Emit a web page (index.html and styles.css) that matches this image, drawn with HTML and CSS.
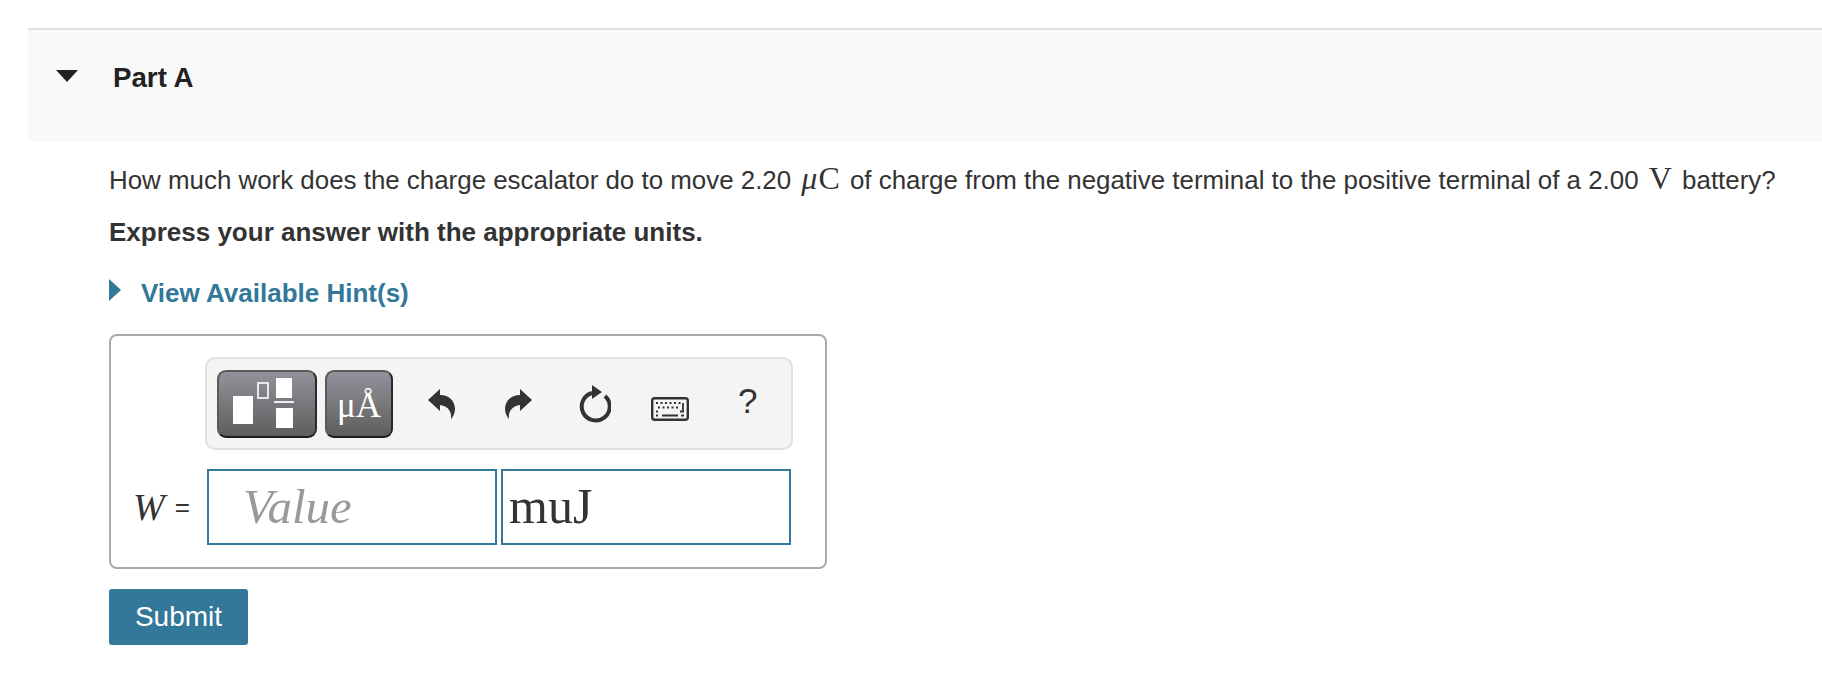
FILE: index.html
```html
<!DOCTYPE html>
<html lang="en">
<head>
    <meta charset="UTF-8">
    <title>Part A</title>
    <link rel="stylesheet" href="styles.css">
</head>
<body>
    <section class="part">
        <header class="part-header">
            <span class="caret-down"></span>
            <h2>Part A</h2>
        </header>

        <div class="part-body">
            <p class="question">How much work does the charge escalator do to move 2.20 <span class="math"><i class="mu">μ</i>C</span> of charge from the negative terminal to the positive terminal of a 2.00 <span class="math">V</span> battery?</p>
            <p class="instruction">Express your answer with the appropriate units.</p>

            <div class="hint">
                <span class="caret-right"></span>
                <a href="#">View Available Hint(s)</a>
            </div>

            <div class="answer-box">
                <div class="toolbar">
                    <button class="tool-btn tool-wide" type="button" aria-label="Templates">
                        <svg width="96" height="64" viewBox="2 2 96 64">
                            <rect x="16" y="26" width="20" height="28" fill="#fff"/>
                            <rect x="41" y="13" width="10" height="15" fill="none" stroke="#e8e8e8" stroke-width="2"/>
                            <rect x="59" y="8" width="16" height="20" fill="#fff"/>
                            <rect x="57" y="31" width="20" height="2" fill="#f0f0f0"/>
                            <rect x="59" y="38" width="17" height="20" fill="#fff"/>
                        </svg>
                    </button>
                    <button class="tool-btn tool-units" type="button">μÅ</button>

                    <svg class="icon icon-undo" width="28" height="32" viewBox="0 0 28 32">
                        <path d="M1 12 13 1v6c9 0 15 6 15 14 0 4-2 8-4 10 1-6-2-13-11-14v6z" fill="#333"/>
                    </svg>
                    <svg class="icon icon-redo" width="28" height="32" viewBox="0 0 28 32">
                        <path d="M27 12 15 1v6C6 7 0 13 0 21c0 4 2 8 4 10-1-6 2-13 11-14v6z" fill="#333"/>
                    </svg>
                    <svg class="icon icon-reset" width="34" height="38" viewBox="0 0 34 38">
                        <path d="M28 11a14 14 0 1 1-13-3" fill="none" stroke="#333" stroke-width="4"/>
                        <path d="M15 0l10 7-10 7z" fill="#333"/>
                    </svg>
                    <svg class="icon icon-keyboard" width="38" height="24" viewBox="0 0 38 24">
                        <rect x="1.2" y="1.2" width="35.6" height="21.6" rx="2.5" fill="none" stroke="#333" stroke-width="2.4"/>
                        <path d="M5 6h2M9.500 6h2M14 6h2M18.500 6h2M23 6h2M27.500 6h2M7 10.500h2M11.500 10.500h2M16 10.500h2M20.500 10.500h2M25 10.500h2M32 6v8.500h-3M5 14.500h2M5 18.500h2M11 18.500h16M30 18.500h3" fill="none" stroke="#333" stroke-width="1.800"/>
                    </svg>
                    <span class="help">?</span>
                </div>

                <div class="answer-row">
                    <label class="answer-label"><i>W</i><span class="equals">=</span></label>
                    <span class="field placeholder">Value</span>
                    <span class="field field-unit">muJ</span>
                </div>
            </div>

            <button class="submit" type="submit">Submit</button>
        </div>
    </section>
</body>
</html>
```

FILE: styles.css
```css
:root {
    --teal: #337899;
    --text: #333333;
    --border: #e0e0e0;
}

* {
    margin: 0;
    padding: 0;
    box-sizing: border-box;
}

body {
    background-color: #ffffff;
    color: var(--text);
    font-family: "Liberation Sans", Arial, sans-serif;
    overflow: hidden;
}

.part {
    padding: 28px 0 0 28px;
}

.part-header {
    display: flex;
    align-items: flex-start;
    height: 114px;
    padding: 32px 0 0 28px;
    background-color: #f9f9f9;
    border-top: 2px solid var(--border);
}

.part-header h2 {
    margin-left: 35px;
    font-size: 27.700px;
    line-height: 32px;
    color: #222222;
}

.caret-down {
    width: 0;
    height: 0;
    margin-top: 8px;
    border-left: 11px solid transparent;
    border-right: 11px solid transparent;
    border-top: 12px solid #222222;
}

.part-body {
    padding: 15px 0 0 81px;
}

.question {
    font-size: 25.900px;
    line-height: 46px;
    white-space: nowrap;
}

.math {
    font-family: "Liberation Serif", serif;
    font-size: 32px;
    line-height: 20px;
    margin: 0 3px;
}

.mu {
    margin-right: 1px;
}

.instruction {
    margin-top: 10px;
    font-size: 26px;
    font-weight: bold;
    line-height: 38px;
}

.hint {
    display: flex;
    align-items: center;
    margin-top: 25px;
    height: 34px;
}

.caret-right {
    width: 0;
    height: 0;
    border-top: 11px solid transparent;
    border-bottom: 11px solid transparent;
    border-left: 12px solid var(--teal);
    margin-top: -6px;
}

.hint a {
    margin-left: 20px;
    font-size: 26px;
    font-weight: bold;
    color: var(--teal);
    text-decoration: none;
}

.answer-box {
    width: 718px;
    height: 235px;
    margin-top: 24px;
    padding: 21px 0 0 94px;
    border: 2px solid #aaaaaa;
    border-radius: 8px;
}

.toolbar {
    display: flex;
    align-items: center;
    width: 588px;
    height: 93px;
    padding-left: 10px;
    background-color: #f4f4f4;
    border: 2px solid var(--border);
    border-radius: 10px;
}

.tool-btn {
    display: flex;
    align-items: center;
    justify-content: center;
    height: 68px;
    color: #ffffff;
    background: linear-gradient(#93919a, #5e5e5e);
    border: 2px solid #5a5a5a;
    border-bottom-color: #1c1c1c;
    border-right-color: #2a2a2a;
    border-radius: 9px;
}

.tool-wide {
    width: 100px;
}

.tool-units {
    width: 68px;
    margin-left: 8px;
    padding-top: 4px;
    font-family: "Liberation Serif", serif;
    font-size: 35px;
}

.icon {
    flex: none;
}

.icon-undo {
    margin: 0 0 0 34px;
}

.icon-redo {
    margin-left: 50px;
}

.icon-reset {
    margin-left: 44px;
}

.icon-keyboard {
    margin: 10px 0 0 40px;
}

.help {
    margin: -6px 0 0 49px;
    font-size: 35px;
    line-height: 40px;
}

.answer-row {
    display: flex;
    align-items: center;
    height: 76px;
    margin: 19px 0 0 -72px;
}

.answer-label {
    display: flex;
    align-items: center;
    flex: 0 0 74px;
    margin-left: 0;
    white-space: nowrap;
    font-family: "Liberation Serif", serif;
    font-size: 38px;
}

.equals {
    margin-left: 10px;
    font-family: "Liberation Sans", sans-serif;
    font-size: 26px;
}

.field {
    width: 290px;
    height: 76px;
    padding-left: 6px;
    border: 2px solid var(--teal);
    font-family: "Liberation Serif", serif;
    font-size: 50px;
    line-height: 70px;
    background-color: #ffffff;
}

.placeholder {
    padding-left: 34px;
    font-size: 49px;
    font-style: italic;
    line-height: 71px;
    color: #999999;
}

.field-unit {
    margin-left: 4px;
}

.submit {
    display: block;
    width: 139px;
    height: 56px;
    margin-top: 20px;
    font-family: "Liberation Sans", sans-serif;
    font-size: 28px;
    color: #ffffff;
    background-color: var(--teal);
    border: none;
    border-radius: 3px;
}
```
